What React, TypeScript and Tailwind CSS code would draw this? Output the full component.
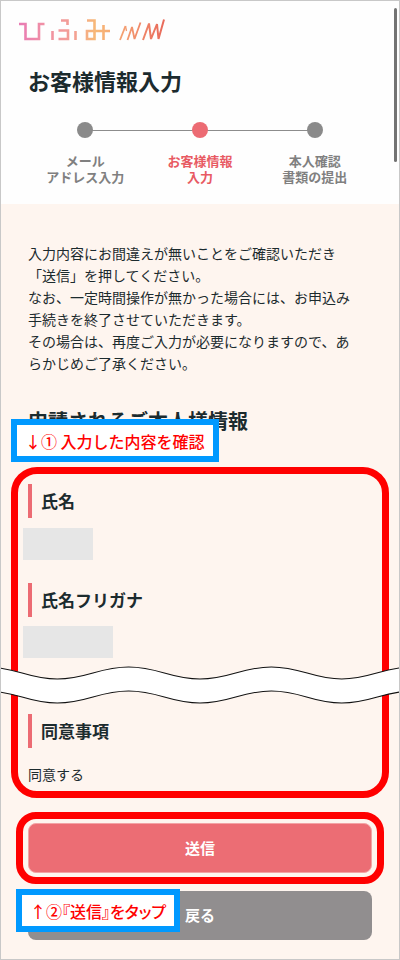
import type { ReactNode } from "react";

const steps = [
	{ lines: ["メール", "アドレス入力"], active: false },
	{ lines: ["お客様情報", "入力"], active: true },
	{ lines: ["本人確認", "書類の提出"], active: false },
];

const introLines = [
	"入力内容にお間違えが無いことをご確認いただき",
	"「送信」を押してください。",
	"なお、一定時間操作が無かった場合には、お申込み",
	"手続きを終了させていただきます。",
	"その場合は、再度ご入力が必要になりますので、あ",
	"らかじめご了承ください。",
];

function Logo() {
	return (
		<svg
			width="148"
			height="26"
			viewBox="18 17 148 26"
			fill="none"
			role="img"
			aria-label="ひふみ"
		>
			<defs>
				<linearGradient id="logo" gradientUnits="userSpaceOnUse" x1="19" y1="0" x2="165" y2="0">
					<stop offset="0" stopColor="#e87bb4" />
					<stop offset="0.16" stopColor="#f08fa6" />
					<stop offset="0.38" stopColor="#f3a093" />
					<stop offset="0.52" stopColor="#f7b878" />
					<stop offset="0.66" stopColor="#f6a873" />
					<stop offset="0.85" stopColor="#ef8568" />
					<stop offset="1" stopColor="#e8695a" />
				</linearGradient>
			</defs>
			<g stroke="url(#logo)" strokeWidth="2.6">
				<path d="M19 24H25.5V39H39V24H44.5" />
				<path d="M52.5 31V40M75.5 31V40M61 20.5H67.5V25M58.5 30.5H68V39H58.5" />
				<path d="M87 20.5H94.5V39H87V31H110M103.5 25V40" />
			</g>
			<g stroke="url(#logo)" strokeLinejoin="bevel">
				<path strokeWidth="1.8" d="M120 40L125.5 26" />
				<path strokeWidth="1.3" d="M125.5 26L126.5 31" />
				<path strokeWidth="1.8" d="M127.5 40L132 27L134.5 39L140.500 22.5" />
				<path strokeWidth="2" d="M143 40L149 23.5L151 39L157 24L158.5 39L164 19.500" />
			</g>
		</svg>
	);
}

function Stepper() {
	return (
		<ol className="relative mt-[26px] grid grid-cols-3">
			{/* line between the first and the last dot */}
			<li aria-hidden="true" className="absolute inset-x-[16%] top-2 h-px bg-[#8c8c8c]" />
			{steps.map((step) => (
				<li
					key={step.lines[0]}
					className={
						step.active
							? "relative flex flex-col items-center text-[#e85a63]"
							: "relative flex flex-col items-center text-[#808080]"
					}
				>
					<span
						className={
							step.active
								? "size-4 rounded-full bg-[#ec6b73]"
								: "size-4 rounded-full bg-[#8a8a8a]"
						}
					/>
					<span className="mt-[15px] text-center text-[13px] leading-4 font-bold whitespace-nowrap">
						{step.lines[0]}
						<br />
						{step.lines[1]}
					</span>
				</li>
			))}
		</ol>
	);
}

function FieldTitle({ children }: { children: ReactNode }) {
	return (
		<h3 className="flex h-[34px] items-center border-l-4 border-[#ec6b73] pl-[9px] text-[17px] font-bold">
			{children}
		</h3>
	);
}

function Note({ children }: { children: ReactNode }) {
	return (
		<p className="flex h-[43px] items-center border-6 border-[#0099ff] bg-white px-2 text-[16px] font-medium whitespace-nowrap text-[#ff0000]">
			{children}
		</p>
	);
}

// Torn strip, shows that part of the list is left out
function Wave() {
	return (
		<svg
			className="absolute -inset-x-[19px] top-[191px] h-[40px] w-[calc(100%+38px)]"
			viewBox="0 0 400 40"
			preserveAspectRatio="none"
			aria-hidden="true"
		>
			<path
				d="M-12 2C18 2 28 14 58 14S99 2 129 2S170 14 200 14S241 2 271 2S312 14 341 14S382 2 412 2V26C382 26 371 38 341 38S301 26 271 26S230 38 200 38S159 26 129 26S88 38 58 38S18 26 -12 26Z"
				fill="#fff"
				stroke="#111"
				strokeWidth="1"
			/>
		</svg>
	);
}

export default function App() {
	return (
		<div className="relative min-h-screen overflow-hidden border border-[#c8c8c8] bg-[#fef5ef] font-['Noto_Sans_CJK_JP',sans-serif] text-[#1c2b2e]">
			<header className="bg-[#fefefe] px-[27px] pt-4 pb-[19px]">
				<div className="-ml-[10px]">
					<Logo />
				</div>
				<h1 className="mt-[21px] text-[22px] leading-8 font-bold">お客様情報入力</h1>
				<Stepper />
			</header>
			<div className="absolute top-[7px] right-[2px] h-[154px] w-[3px] rounded-full bg-[#737373]" />

			<main className="pt-[38px] pb-[19px]">
				<p className="px-[27px] text-[14px] leading-[22px] whitespace-nowrap">
					{introLines.map((line) => (
						<span key={line} className="block">
							{line}
						</span>
					))}
				</p>

				<div className="relative mt-[32px]">
					<h2 className="px-[27px] text-[20px] leading-[30px] font-bold">
						申請されるご本人様情報
					</h2>
					<div className="absolute top-[13px] left-[10px]">
						<Note>↓① 入力した内容を確認</Note>
					</div>
				</div>

				<section className="relative mx-[10px] mt-[31px] rounded-[26px] border-7 border-[#ff0000] px-[10px] pt-[10px] pb-[6px]">
					<FieldTitle>氏名</FieldTitle>
					<div className="mt-[10px] -ml-[5px] h-8 w-[70px] bg-[#e6e6e6]" />
					<div className="mt-[23px]">
						<FieldTitle>氏名フリガナ</FieldTitle>
					</div>
					<div className="mt-[9px] -ml-[5px] h-8 w-[90px] bg-[#e6e6e6]" />
					<div className="mt-[56px]">
						<FieldTitle>同意事項</FieldTitle>
					</div>
					<p className="mt-[15px] text-[14px] leading-[22px]">同意する</p>
					<Wave />
				</section>

				<div className="mx-[15px] mt-[14px] rounded-[20px] border-7 border-[#ff0000] px-[5px] py-[4px]">
					<button
						type="button"
						className="block h-[50px] w-full rounded-lg border border-[#f3a3a5] bg-[#ec6d74] text-[15px] font-bold text-white"
					>
						送信
					</button>
				</div>
				<div className="relative mt-[7px] px-[27px]">
					<button
						type="button"
						className="block h-[49px] w-full rounded-lg bg-[#918e8f] text-[15px] font-bold text-white"
					>
						戻る
					</button>
					<div className="absolute -top-[2px] left-[15px] [font-feature-settings:'palt']">
						<Note>↑②『送信』をタップ</Note>
					</div>
				</div>
			</main>
		</div>
	);
}
